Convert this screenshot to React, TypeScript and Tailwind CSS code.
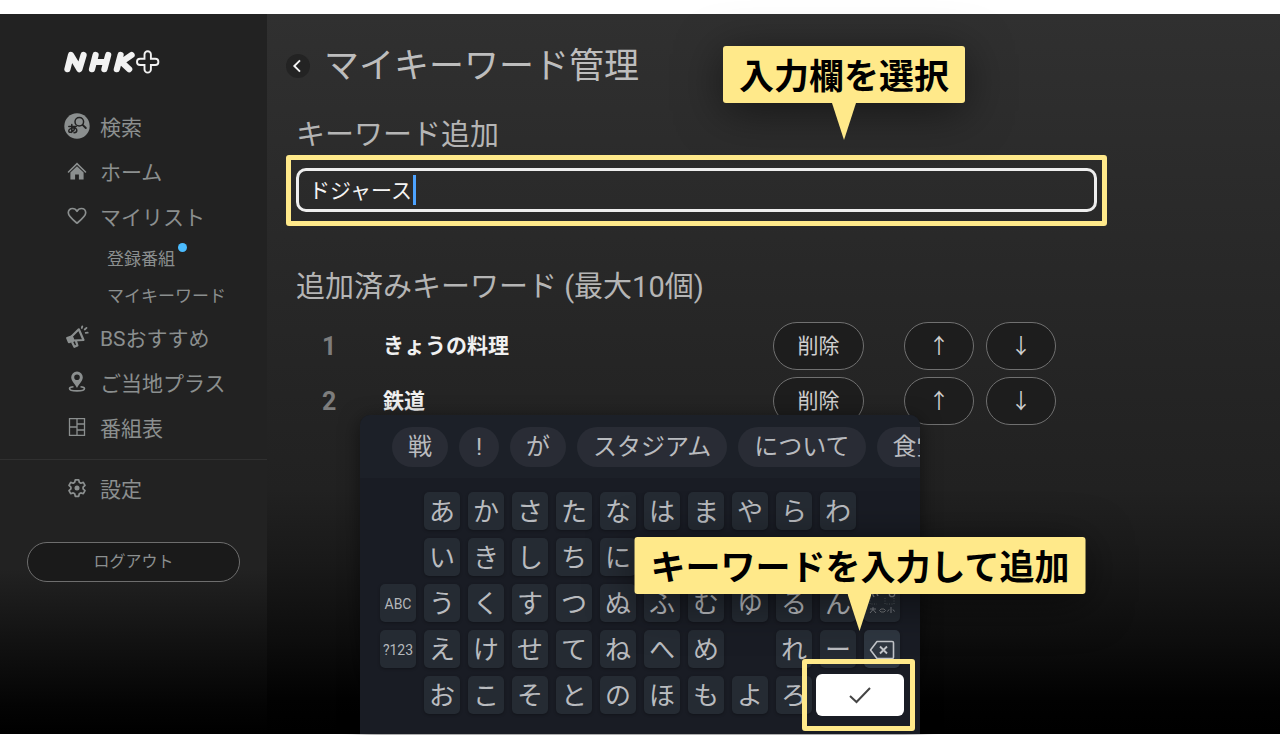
import type { ReactNode } from "react";

const keyRows: string[] = [
  " あかさたなはまやらわ ",
  " いきしちにひみ り  ",
  "Aうくすつぬふむゆるんd",
  "1えけせてねへめ れーx",
  " おこそとのほもよろ",
];

const suggestions = ["戦", "!", "が", "スタジアム", "について", "食堂"];

function SearchIcon() {
  return (
    <svg viewBox="0 0 26 26" className="size-[26px]" aria-hidden="true">
      <circle cx="13" cy="13" r="12.7" fill="#8b8f8f" />
      <circle cx="15.300" cy="8.700" r="4.300" fill="none" stroke="#222" strokeWidth="1.500" />
      <path d="M18.600 11.800l3.200 3.200" stroke="#222" strokeWidth="1.900" strokeLinecap="round" />
      <path
        d="M4.800 13.600h7.400M7.800 11.600v6.600c0 1.200-3 1.800-3-.2 0-3 8-4.400 8-.8 0 1.600-1.300 2.500-2.800 2.600M11 14.600c-.5 2.200-1.800 4-3.600 4.800"
        fill="none"
        stroke="#222"
        strokeWidth="1.500"
        strokeLinecap="round"
      />
    </svg>
  );
}

function HomeIcon() {
  return (
    <svg viewBox="0 0 20 20" className="size-5" aria-hidden="true">
      <path d="M1.500 11L10 2.700l8.500 8.300" fill="none" stroke="currentColor" strokeWidth="1.600" strokeLinecap="round" />
      <path d="M10 5.300l6.600 6.300V18.500h-4.700v-5H8.100v5H3.400v-6.900z" fill="currentColor" />
    </svg>
  );
}

function HeartIcon() {
  return (
    <svg viewBox="0 0 20 20" className="size-5" aria-hidden="true">
      <path
        d="M10 17.200C5.500 13.500 1.300 10.300 1.300 6.800 1.300 4.300 3.200 2.500 5.500 2.500c1.900 0 3.500 1 4.500 2.800 1-1.800 2.600-2.800 4.500-2.800 2.300 0 4.200 1.800 4.200 4.300 0 3.500-4.200 6.700-8.700 10.400z"
        fill="none"
        stroke="currentColor"
        strokeWidth="1.700"
        strokeLinejoin="round"
      />
    </svg>
  );
}

function MegaphoneIcon() {
  return (
    <svg viewBox="0 0 24 24" className="size-6" aria-hidden="true">
      <g fill="none" stroke="currentColor" strokeWidth="2.200" strokeLinejoin="round">
        <path d="M13.800 4.300L18.500 15 8.500 15.500 6.800 11.300z" />
        <path d="M6.500 11.500l-4.300 1.600 1.700 4 4.400-1.500z" fill="currentColor" />
        <path d="M7 17l2.400 4.800 3-1.200-1.500-4.800" />
      </g>
      <path d="M16.800 3l.5-1.700M19.700 4.500l1.800-1.600M20.700 7.800l2-.1" stroke="currentColor" strokeWidth="1.800" strokeLinecap="round" />
    </svg>
  );
}

function PinIcon() {
  return (
    <svg viewBox="0 0 20 22" className="h-[22px] w-5" aria-hidden="true">
      <path
        fillRule="evenodd"
        d="M10 .5a5.800 5.800 0 0 0-5.800 5.800c0 3.700 3.800 6.700 5.800 10.700 2-4 5.800-7 5.800-10.700A5.800 5.800 0 0 0 10 .5zm0 3a2.800 2.800 0 1 1 0 5.600 2.800 2.800 0 0 1 0-5.600z"
        fill="currentColor"
      />
      <path
        d="M6.500 15.700c-2.500.2-4 .9-4 1.800 0 1.400 3 2.400 7.500 2.400s7.500-1 7.500-2.400c0-.9-1.500-1.600-4-1.800"
        fill="none"
        stroke="currentColor"
        strokeWidth="1.600"
      />
    </svg>
  );
}

function TableIcon() {
  return (
    <svg viewBox="0 0 20 20" className="size-5" aria-hidden="true">
      <path
        d="M2.500 1.700h15v16.600h-15zM10 1.700v16.600M2.500 10H10M10 7h7.500M10 13h7.500"
        fill="none"
        stroke="currentColor"
        strokeWidth="1.300"
      />
    </svg>
  );
}

function GearIcon() {
  return (
    <svg viewBox="0 0 20 20" className="size-5" aria-hidden="true">
      <path
        d="M8.300 1.800h3.400l.6 2.500 1.500.9 2.500-.8 1.700 3-1.900 1.800v1.700l1.900 1.800-1.700 3-2.500-.8-1.500.9-.6 2.500H8.300l-.6-2.500-1.500-.9-2.500.8-1.700-3 1.900-1.800V9.200L2 7.400l1.700-3 2.500.8 1.500-.9z"
        fill="none"
        stroke="currentColor"
        strokeWidth="1.700"
        strokeLinejoin="round"
      />
      <circle cx="10" cy="10" r="2.500" fill="currentColor" />
    </svg>
  );
}

function Logo() {
  return (
    <svg viewBox="0 0 96 24" className="h-6 w-24" role="img" aria-label="NHK+">
      <g fill="none" stroke="#f2f2f2" strokeWidth="6.200" strokeLinecap="round" strokeLinejoin="round">
        <path d="M3.400 19.200L7 5 15.400 19.200 19.600 5" />
        <path d="M28 19.200L31.600 5M40.400 19.200L44.200 5M30.500 12h11" />
        <path d="M52.800 19.200L56.600 5M67.600 5L57.500 12 65.200 19.200" />
      </g>
      <path
        d="M83.700 1.200a3.200 3.200 0 0 1 3.200 3.200v4.400h4.400a3.100 3.100 0 0 1 0 6.200h-4.400v4.400a3.200 3.200 0 0 1-6.400 0V15h-4.400a3.100 3.100 0 0 1 0-6.200h4.400V4.400a3.200 3.200 0 0 1 3.200-3.200z"
        fill="none"
        stroke="#f2f2f2"
        strokeWidth="1.900"
      />
    </svg>
  );
}

function NavItem({ icon, label }: { icon: ReactNode; label: string }) {
  return (
    <a href="#" className="flex h-[45px] items-center pl-16 text-[21px]">
      <span className="flex w-9 shrink-0 pb-[5px]">
        <span className="flex w-[26px] justify-center">{icon}</span>
      </span>
      {label}
    </a>
  );
}

function Callout({ children }: { children: ReactNode }) {
  return (
    <div className="flex flex-col items-center">
      <div className="flex h-[57px] items-center rounded-[3px] bg-[#ffe98a] px-4 pt-1.5 text-[35px] font-bold whitespace-nowrap text-black shadow-[0_8px_45px_rgba(0,0,0,0.5)]">
        {children}
      </div>
      <svg viewBox="0 0 24 37" className="relative h-[37px] w-6" aria-hidden="true">
        <path d="M0 0h24L12 37z" fill="#ffe98a" />
      </svg>
    </div>
  );
}

const pill = "flex h-12 items-center justify-center rounded-full border border-[#707070] bg-[#1d1d1d] text-[21px] text-[#cfcfcf]";

function KeywordRow({ index, name }: { index: number; name: string }) {
  return (
    <li className="flex items-center">
      <span className="w-[87px] pl-[26px] text-[25px] font-bold text-[#7d7d7d]">{index}</span>
      <span className="w-[390px] text-[21px] font-bold text-[#f0f0f0]">{name}</span>
      <button className={pill + " w-[91px]"}>削除</button>
      <button className={pill + " ml-10 w-[70px]"} aria-label="上へ">↑</button>
      <button className={pill + " ml-3 w-[70px]"} aria-label="下へ">↓</button>
    </li>
  );
}

const keyBase = "flex h-[38px] items-center justify-center rounded-[5px] shadow-[0_1px_3px_rgba(0,0,0,0.3)]";

function Key({ id }: { id: string }) {
  if (id === " ") return <span />;
  if (id === "A") return <button className={keyBase + " bg-[#252b33] pt-0.5 text-sm text-[#b4b7bb]"}>ABC</button>;
  if (id === "1") return <button className={keyBase + " bg-[#252b33] pt-0.5 text-sm text-[#b4b7bb]"}>?123</button>;
  if (id === "d")
    return (
      <button className={keyBase + " bg-[#252b33] text-[#85888c]"} aria-label="濁点・半濁点・大小">
        <svg viewBox="0 0 36 38" className="h-[38px] w-9" aria-hidden="true">
          <g fill="none" stroke="currentColor">
            <path d="M8 9l2 4M12 8l2 4" strokeWidth="1.500" />
            <circle cx="28" cy="10" r="2.700" strokeWidth="1.300" />
            <path d="M6 14v6h7M21 14v6h9v-6" strokeWidth=".5" strokeDasharray="1 1.500" />
            <path d="M6 25h6M9 23v2.500l-3 3.500M9 25.500l3 3.500M27 23v6M25 25.500l-1.500 2M29 25.500l1.500 2" strokeWidth=".9" />
            <path d="M15.500 26.500l1.500-1.500h3l1.500 1.500L20 28h-3z" strokeWidth=".8" />
          </g>
        </svg>
      </button>
    );
  if (id === "x")
    return (
      <button className={keyBase + " bg-[#2e3640] pt-0.5 text-[#c2c5c9]"} aria-label="削除">
        <svg viewBox="0 0 26 20" className="h-5 w-[26px]" fill="none" stroke="currentColor" aria-hidden="true">
          <path d="M8 1.500h15.200a1.300 1.300 0 0 1 1.300 1.300v14.400a1.300 1.300 0 0 1-1.300 1.300H8L1.500 10z" strokeWidth="1.600" strokeLinejoin="round" />
          <path d="M11 6.500l7 7M18 6.500l-7 7" strokeWidth="1.900" />
        </svg>
      </button>
    );
  return <button className={keyBase + " bg-[#252b33] pt-0.5 text-[26px] text-[#b9bbbf]"}>{id}</button>;
}

function Keyboard() {
  return (
    <section
      aria-label="キーボード"
      className="absolute bottom-0 left-1/2 w-[560px] -translate-x-1/2 rounded-t-[10px] bg-[#191c24] shadow-[0_4px_20px_rgba(0,0,0,0.5)]"
    >
      <div className="flex h-[63px] items-center gap-[11px] overflow-hidden rounded-t-[10px] bg-[#1c2028] pl-8">
        {suggestions.map((word) => (
          <button
            key={word}
            className="flex h-10 min-w-10 shrink-0 items-center justify-center rounded-full bg-[#292c35] px-4 text-2xl whitespace-nowrap text-[#b9bbbf]"
          >
            {word}
          </button>
        ))}
      </div>
      <div className="grid grid-cols-12 gap-2 px-5 pt-3.5 pb-5">
        {keyRows.map((row) => Array.from(row).map((id, i) => <Key key={row + i} id={id} />))}
        <div className="relative col-span-2 flex h-[38px] items-center justify-center">
          <button
            aria-label="決定"
            className="flex h-[42px] w-[88px] shrink-0 items-center justify-center rounded-md bg-white text-[#444]"
          >
            <svg viewBox="0 0 24 18" className="h-[18px] w-6" fill="none" stroke="currentColor" strokeWidth="2" aria-hidden="true">
              <path d="M2 10l6.500 6L22 2" />
            </svg>
          </button>
          <div className="pointer-events-none absolute -top-[17px] -right-[15px] -bottom-[17px] -left-[18px] rounded-[3px] border-[5px] border-[#ffe98a]" />
          <div className="pointer-events-none absolute bottom-[83px] left-1/2 -translate-x-1/2">
            <Callout>キーワードを入力して追加</Callout>
          </div>
        </div>
      </div>
    </section>
  );
}

export default function App() {
  return (
    <div lang="ja" className="h-screen bg-white pt-3.5 pb-px font-[Roboto,'Noto_Sans_CJK_JP',sans-serif] leading-none">
      <div className="relative flex h-full bg-[linear-gradient(to_bottom,#303030_0%,#212121_66%,#191919_76%,#0d0d0d_87%,#020202_95%,#000000_100%)]">
        <aside className="flex w-[267px] shrink-0 flex-col bg-[linear-gradient(to_bottom,#222222_0%,#222222_77%,#121212_87%,#040404_96%,#000000_100%)] text-[#8b8f8f]">
          <div className="pt-9 pl-16">
            <Logo />
          </div>
          <nav className="mt-8 flex flex-col">
            <NavItem icon={<SearchIcon />} label="検索" />
            <NavItem icon={<HomeIcon />} label="ホーム" />
            <NavItem icon={<HeartIcon />} label="マイリスト" />
            <div className="flex flex-col pb-0.5 pl-[107px] text-[17px]">
              <a href="#" className="flex h-[37px] items-center">
                <span className="relative">
                  登録番組
                  <span className="absolute -top-2 -right-3 size-[9px] rounded-full bg-[#4bbcff]" />
                </span>
              </a>
              <a href="#" className="flex h-[37px] items-center">マイキーワード</a>
            </div>
            <NavItem icon={<MegaphoneIcon />} label="BSおすすめ" />
            <NavItem icon={<PinIcon />} label="ご当地プラス" />
            <NavItem icon={<TableIcon />} label="番組表" />
            <div className="mt-[7px] mb-2 border-t border-[#303030]" />
            <NavItem icon={<GearIcon />} label="設定" />
          </nav>
          <button className="mx-[27px] mt-[29px] h-10 rounded-full border border-[#6e6e6e] bg-[#1a1a1a] text-base">
            ログアウト
          </button>
        </aside>

        <main className="flex min-w-0 flex-1 flex-col pl-[19px]">
          <header className="mt-8 flex h-10 items-center">
            <button
              aria-label="戻る"
              className="flex size-6 items-center justify-center rounded-full bg-[#232323] pr-0.5 text-[#f5f5f5]"
            >
              <svg viewBox="0 0 10 14" className="h-3.5 w-2.5" fill="none" stroke="currentColor" strokeWidth="1.900" aria-hidden="true">
                <path d="M8 1.300L2.300 7 8 12.700" />
              </svg>
            </button>
            <h1 className="ml-3.5 text-[35px] text-[#bdbdbd]">マイキーワード管理</h1>
          </header>

          <label htmlFor="keyword" className="mt-[30px] pl-2.5 text-[29px] leading-[38px] text-[#b5b5b5]">
            キーワード追加
          </label>
          <div className="relative mt-px w-full max-w-[821px] rounded-[3px] border-[5px] border-[#ffe98a] px-[5px] pt-2 pb-[9px]">
            <input
              id="keyword"
              type="text"
              defaultValue="ドジャース"
              className="block h-11 w-full rounded-[10px] border-[3px] border-[#eeeeee] bg-transparent px-2.5 pb-0.5 text-[21px] text-[#f5f5f5] outline-none"
            />
            <span className="absolute top-[15px] left-[122px] h-[30px] w-[3px] bg-[#4da3ff]" />
            <div className="pointer-events-none absolute bottom-[81px] left-[432px]">
              <Callout>入力欄を選択</Callout>
            </div>
          </div>

          <h2 className="mt-[42px] pl-2.5 text-[29px] leading-[38px] text-[#b5b5b5]">追加済みキーワード (最大10個)</h2>
          <ol className="mt-4 flex flex-col gap-[7px] pl-2.5">
            <KeywordRow index={1} name="きょうの料理" />
            <KeywordRow index={2} name="鉄道" />
          </ol>
        </main>

        <Keyboard />
      </div>
    </div>
  );
}
